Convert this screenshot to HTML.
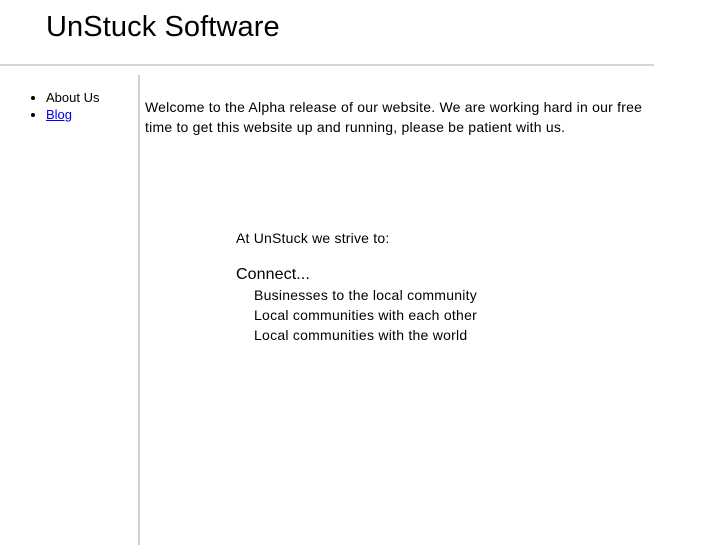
<!DOCTYPE html>
<html><head><style>
body{margin:0;width:727px;height:545px;overflow:hidden;background:#fff;font-family:"Liberation Sans",sans-serif;color:#000;position:relative}
.t{position:absolute;left:46px;top:11px;font-size:29px;letter-spacing:0.1px;white-space:nowrap}
.hr{position:absolute;left:0;top:64px;width:654px;height:2px;background:#d6d6d6}
.vr{position:absolute;left:138px;top:75px;width:2px;height:470px;background:#d0d0d0}
ul{position:absolute;left:0;top:89px;margin:0;padding-left:46px;font-size:13px;line-height:17px}
a{color:#00e}
.p{position:absolute;left:145px;top:97px;font-size:14px;line-height:20px;width:520px;letter-spacing:0.22px}
.a{position:absolute;left:236px;top:228px;font-size:14px;line-height:20px;letter-spacing:0.2px}
.c{position:absolute;left:236px;top:266px;font-size:16px;letter-spacing:0.1px}
.l{position:absolute;left:254px;top:285px;font-size:14px;line-height:20px;letter-spacing:0.25px}
</style></head><body>
<div class="t">UnStuck Software</div>
<div class="hr"></div>
<div class="vr"></div>
<ul><li>About Us</li><li><a href="#">Blog</a></li></ul>
<div class="p">Welcome to the Alpha release of our website. We are working hard in our free time to get this website up and running, please be patient with us.</div>
<div class="a">At UnStuck we strive to:</div>
<div class="c">Connect...</div>
<div class="l">Businesses to the local community<br>Local communities with each other<br>Local communities with the world</div>
</body></html>
